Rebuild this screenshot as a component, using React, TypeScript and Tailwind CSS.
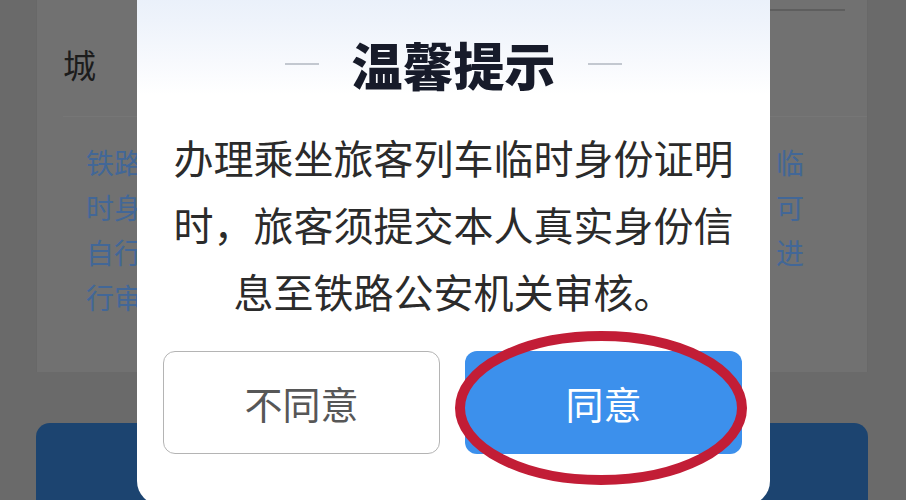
export default function App() {
  return (
    <div className="relative w-[906px] h-[500px] overflow-hidden bg-[#6a6a6a] font-['Noto_Sans_CJK_SC','Noto_Sans',sans-serif]">
      {/* background page (dimmed) */}
      <div className="flex flex-col pl-[36px] pr-[38px]">
        <div className="h-[372px] bg-[#717171] flex flex-col border-x border-[#686868]">
          <div className="h-[11px] ml-[400px] mr-[22px] border-b-[2px] border-[#5e5e5e]" />
          <div className="mt-[33px] pl-[26px] text-[33px] leading-[40px] text-[#1c1c1c]">城</div>
          <div className="mt-[32px] ml-[26px] border-t border-[#767676]" />
          <div className="mt-[23px] pl-[49px] pr-[63px] flex flex-col text-[28px] leading-[45px] text-[#426797]">
            <div className="flex justify-between"><span>铁路</span><span>临</span></div>
            <div className="flex justify-between"><span>时身</span><span>可</span></div>
            <div className="flex justify-between"><span>自行</span><span>进</span></div>
            <div className="flex justify-between"><span>行审</span><span></span></div>
          </div>
        </div>
        <div className="mt-[51px] h-[100px] rounded-t-[14px] bg-[#1c4470]" />
      </div>

      {/* dialog */}
      <div className="absolute left-[137px] top-[-40px] w-[633px] h-[545px] rounded-[24px] overflow-hidden bg-[linear-gradient(180deg,#e3ecf8_0px,#eef3fb_60px,#f7f9fd_100px,#ffffff_135px)] flex flex-col items-center">
        <div className="mt-[74px] flex items-center gap-[32px]">
          <div className="w-[34px] h-[2px] bg-[#c3c8d0]" />
          <div className="text-[51px] leading-[60px] font-black text-[#171b2a]">温馨提示</div>
          <div className="w-[34px] h-[2px] bg-[#c3c8d0]" />
        </div>
        <div className="mt-[30px] flex flex-col items-center text-[40px] leading-[67px] text-[#2b2b2b]">
          <div>办理乘坐旅客列车临时身份证明</div>
          <div>时，旅客须提交本人真实身份信</div>
          <div>息至铁路公安机关审核。</div>
        </div>
        <div className="mt-[26px] w-full px-[26px] flex gap-[25px]">
          <div className="w-[277px] h-[103px] rounded-[12px] border border-[#b4b4b4] bg-white flex items-center justify-center text-[38px] text-[#575757]">不同意</div>
          <div className="w-[277px] h-[103px] rounded-[12px] bg-[#3c90ec] flex items-center justify-center text-[38px] text-white">同意</div>
        </div>
      </div>

      {/* red circle annotation */}
      <svg className="absolute left-[450px] top-[328px]" width="300" height="160" viewBox="0 0 300 160">
        <ellipse cx="151" cy="80" rx="141" ry="72" fill="none" stroke="#c21d36" strokeWidth="10" />
      </svg>
    </div>
  );
}
